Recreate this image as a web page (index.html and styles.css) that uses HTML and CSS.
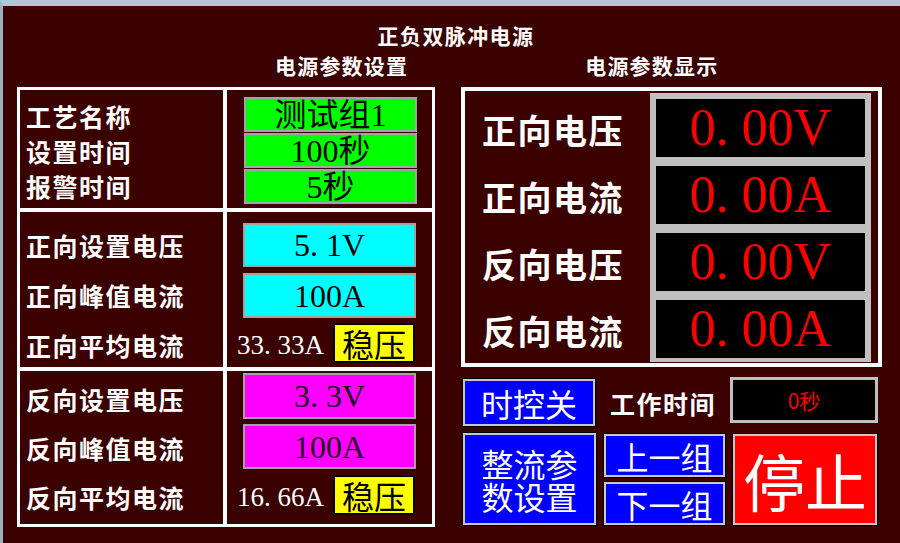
FILE: index.html
```html
<!DOCTYPE html>
<html lang="zh-CN">
<head>
<meta charset="utf-8">
<title>正负双脉冲电源</title>
<link rel="stylesheet" href="styles.css">
</head>
<body>
<div class="win">
  <div class="title">正负双脉冲电源</div>
  <div class="heads">
    <div class="hd hd-set">电源参数设置</div>
    <div class="hd hd-show">电源参数显示</div>
  </div>
  <div class="main">
    <div class="lp">
      <div class="lab s1">
        <div>工艺名称</div>
        <div>设置时间</div>
        <div>报警时间</div>
      </div>
      <div class="val v1">
        <div class="box green b1">测试组1</div>
        <div class="box green b1">100秒</div>
        <div class="box green b1">5秒</div>
      </div>
      <div class="lab s2">
        <div>正向设置电压</div>
        <div>正向峰值电流</div>
        <div>正向平均电流</div>
      </div>
      <div class="val v2">
        <div class="box cyan h44">5<span class="dot">.</span>1V</div>
        <div class="box cyan h45 g6">100A</div>
        <div class="avg g5"><span class="num">33<span class="dot">.</span>33A</span><span class="stab">稳压</span></div>
      </div>
      <div class="lab s3">
        <div>反向设置电压</div>
        <div>反向峰值电流</div>
        <div>反向平均电流</div>
      </div>
      <div class="val v3">
        <div class="box magenta h46">3<span class="dot">.</span>3V</div>
        <div class="box magenta h45 g5">100A</div>
        <div class="avg g6 h41"><span class="num">16<span class="dot">.</span>66A</span><span class="stab">稳压</span></div>
      </div>
    </div>
    <div class="rcol">
      <div class="rp">
        <div class="rlabels">
          <div>正向电压</div>
          <div>正向电流</div>
          <div>反向电压</div>
          <div>反向电流</div>
        </div>
        <div class="gray">
          <div class="disp">0<span class="dot">.</span>00V</div>
          <div class="disp">0<span class="dot">.</span>00A</div>
          <div class="disp">0<span class="dot">.</span>00V</div>
          <div class="disp">0<span class="dot">.</span>00A</div>
        </div>
      </div>
      <div class="ctrl1">
        <div class="btn tk">时控关</div>
        <div class="work">工作时间</div>
        <div class="tdisp">0秒</div>
      </div>
      <div class="ctrl2">
        <div class="btn zl"><span class="ln">整流参</span><span class="ln">数设置</span></div>
        <div class="pair">
          <div class="btn grp">上一组</div>
          <div class="btn grp">下一组</div>
        </div>
        <div class="btn stop">停止</div>
      </div>
    </div>
  </div>
</div>
</body>
</html>
```
FILE: styles.css
```css
* { box-sizing: border-box; }

body {
  margin: 0;
  width: 900px;
  height: 543px;
  overflow: hidden;
  background: #3b0000;
  font-family: "Noto Sans CJK SC", sans-serif;
}

.win {
  height: 543px;
  background: #3b0000;
  border-top: 6px solid #b6c5d4;
  border-left: 3px solid #9eafc0;
}

.title {
  margin-top: 17px;
  padding-left: 9px;
  text-align: center;
  color: #fff;
  font-weight: 700;
  font-size: 21px;
  letter-spacing: 1.4px;
  line-height: 24px;
}

.heads {
  display: flex;
  margin-top: 6px;
  padding-left: 272px;
  height: 24px;
}

.hd {
  color: #fff;
  font-weight: 700;
  font-size: 21px;
  letter-spacing: 1.2px;
  line-height: 24px;
  white-space: nowrap;
}

.hd-show { margin-left: 177px; }

.main {
  display: flex;
  margin-top: 10px;
  padding-left: 14px;
}

/* left panel */
.lp {
  width: 418px;
  height: 440px;
  background: #fff;
  padding: 3px;
  display: grid;
  grid-template-columns: 203px 205px;
  grid-template-rows: 118px 155px 153px;
  gap: 4px;
}

.lp > div { background: #3b0000; }

.lab {
  color: #fff;
  font-weight: 700;
  font-size: 25px;
  letter-spacing: 1.5px;
  padding-left: 6px;
  white-space: nowrap;
}

.s1 { padding-top: 9px; line-height: 35px; }
.s2 { padding-top: 8px; line-height: 50px; }
.s3 { padding-top: 4px; line-height: 49px; }

.val {
  display: flex;
  flex-direction: column;
  padding-left: 16px;
}

.v1 { padding-top: 7px; padding-left: 17px; gap: 1px; }
.v2 { padding-top: 11px; }
.v3 { padding-top: 2px; }

.box {
  width: 173px;
  border: 2px solid #a3a3a3;
  display: flex;
  align-items: center;
  justify-content: center;
  color: #000;
  font-family: "Liberation Serif", "Noto Sans CJK SC", serif;
  font-size: 32px;
  line-height: 1;
  overflow: visible;
  white-space: nowrap;
}

.b1 { height: 35px; }
.h44 { height: 44px; }
.h45 { height: 45px; }
.h46 { height: 46px; }
.h41 { height: 41px; }
.g5 { margin-top: 5px; }
.g6 { margin-top: 6px; }

.green { background: #00ff00; }
.cyan { background: #00ffff; }
.magenta { background: #ff00ff; color: #1a0020; }

.dot { margin-right: 0.25em; }

.avg {
  display: flex;
  align-items: center;
  height: 40px;
  margin-left: -6px;
}

.num {
  width: 96px;
  color: #fff;
  font-family: "Liberation Serif", serif;
  font-size: 27px;
  line-height: 1;
  padding-top: 4px;
  white-space: nowrap;
}

.stab {
  width: 82px;
  height: 100%;
  background: #ffff00;
  border: 2px solid #000;
  display: flex;
  align-items: center;
  justify-content: center;
  color: #000;
  font-size: 32px;
  line-height: 1;
}

/* right column */
.rcol {
  margin-left: 26px;
  width: 421px;
}

.rp {
  height: 280px;
  border: 4px solid #fff;
  display: flex;
}

.rlabels {
  width: 185px;
  padding-left: 17px;
  padding-top: 10px;
  display: flex;
  flex-direction: column;
  gap: 9px;
}

.rlabels > div {
  height: 58px;
  line-height: 58px;
  color: #fff;
  font-weight: 700;
  font-size: 34px;
  letter-spacing: 1.5px;
  white-space: nowrap;
}

.gray {
  width: 221px;
  height: 269px;
  margin-top: 2px;
  background: #c0c0c0;
  padding: 6px 6px 4px;
  display: flex;
  flex-direction: column;
  gap: 9px;
}

.disp {
  height: 58px;
  background: #000;
  color: #ff0000;
  font-family: "Liberation Serif", serif;
  font-size: 52px;
  line-height: 58px;
  text-align: center;
  white-space: nowrap;
}

.btn {
  background: #0000ff;
  border: 2px solid #c8c8c8;
  box-shadow: 0 0 0 1px #000;
  color: #fff;
  display: flex;
  align-items: center;
  justify-content: center;
  text-align: center;
  font-size: 32px;
  line-height: 1;
  white-space: nowrap;
}

.ctrl1 {
  display: flex;
  align-items: flex-start;
  margin-top: 10px;
  height: 49px;
}

.tk {
  width: 132px;
  height: 47px;
  margin-top: 2px;
  margin-left: 2px;
}

.work {
  margin-left: 15px;
  padding-top: 2px;
  color: #fff;
  font-weight: 700;
  font-size: 25px;
  letter-spacing: 1.5px;
  line-height: 49px;
  white-space: nowrap;
}

.tdisp {
  margin-left: 14px;
  width: 148px;
  height: 46px;
  background: #000;
  border: 3px solid #c0c0c0;
  color: #ff0000;
  font-size: 21px;
  display: flex;
  align-items: center;
  justify-content: center;
}

.ctrl2 {
  display: flex;
  align-items: flex-start;
  margin-top: 7px;
}

.zl {
  width: 133px;
  height: 92px;
  margin-left: 2px;
  flex-direction: column;
  gap: 1px;
}

.zl .ln {
  display: block;
  height: 32px;
  line-height: 32px;
}

.pair {
  margin-left: 8px;
  margin-top: 1px;
  width: 121px;
  display: flex;
  flex-direction: column;
  gap: 5px;
}

.grp { height: 43px; }

.stop {
  margin-left: 8px;
  margin-top: 1px;
  width: 144px;
  height: 91px;
  background: #ff0000;
  font-size: 62px;
}
```
